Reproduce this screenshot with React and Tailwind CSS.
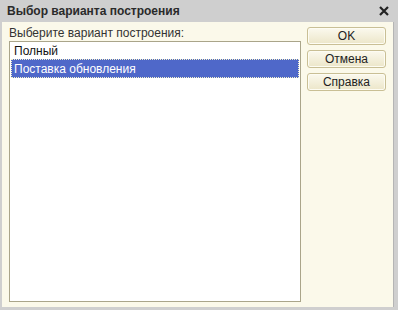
import React, { useState } from "react";

const items = ["Полный", "Поставка обновления"];

function Btn({ children }) {
  return (
    <button className="h-[18px] w-[79px] rounded-[3px] border border-[#c9bf95] bg-gradient-to-b from-[#fbf9ee] to-[#ece6c9] text-[12px] leading-none text-[#222] shadow-[inset_0_0_0_1px_#fdfcf3]">
      {children}
    </button>
  );
}

export default function App() {
  const [selected, setSelected] = useState(1);

  return (
    <div
      className="flex h-[310px] w-[398px] flex-col bg-[#cfcfcf] px-[2px] pb-[3px]"
      style={{ fontFamily: '"Liberation Sans", Arial, sans-serif' }}
    >
      <div className="flex h-[22px] shrink-0 items-center justify-between pl-[5px] pr-[7px]">
        <span className="text-[12px] font-bold text-[#2a2a2a]">
          Выбор варианта построения
        </span>
        <svg width="10" height="10" viewBox="0 0 10 10">
          <path d="M1 1L9 9M9 1L1 9" stroke="#222" strokeWidth="2.2" />
        </svg>
      </div>
      <div className="flex flex-1 bg-[#fbf9ea] pl-[7px] pr-[7px] pb-[5px] mr-[2px] border-r border-[#b5b5b5]">
        <div className="flex w-[293px] flex-col">
          <div className="h-[19px] pt-[4px] text-[12px] leading-[14px] text-[#333]">
            Выберите вариант построения:
          </div>
          <div className="flex-1 border border-[#aaa58a] bg-white">
            {items.map((it, i) => (
              <div
                key={it}
                onClick={() => setSelected(i)}
                className={
                  i === selected
                    ? "mx-[1px] flex h-[19px] items-center border border-dotted border-[#f3f1c8] bg-[#4f68c9] px-[2px] text-[12px] text-white"
                    : "mx-[1px] flex h-[17px] items-center px-[3px] pt-[1px] text-[12px] text-[#111]"
                }
              >
                {it}
              </div>
            ))}
          </div>
        </div>
        <div className="ml-[6px] flex flex-col gap-[5px] pt-[5px]">
          <Btn>OK</Btn>
          <Btn>Отмена</Btn>
          <Btn>Справка</Btn>
        </div>
      </div>
    </div>
  );
}
